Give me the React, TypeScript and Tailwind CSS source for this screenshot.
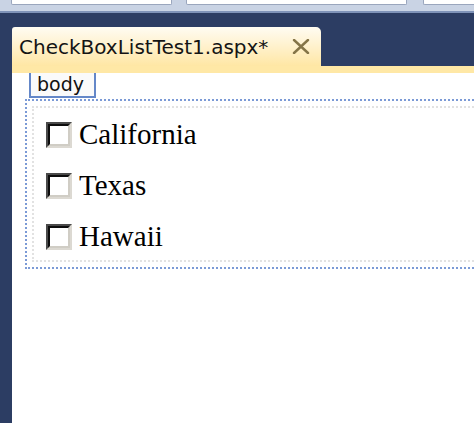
const ITEMS = ['California', 'Texas', 'Hawaii']

function CloseIcon() {
  return (
    <svg width="18" height="15" viewBox="0 0 18 15" aria-hidden>
      <path d="M2 1 L16 14 M16 1 L2 14" stroke="#857548" strokeWidth="2.4" strokeLinecap="round" />
    </svg>
  )
}

function Box() {
  return (
    <span className="flex h-[26px] w-[26px] shrink-0 border-2 border-t-[#4a4a4a] border-l-[#4a4a4a] border-b-[#dcd9d2] border-r-[#dcd9d2]">
      <span className="flex-1 border-2 border-t-[#0d0d0d] border-l-[#0d0d0d] border-b-[#d0cdc5] border-r-[#d0cdc5] bg-white" />
    </span>
  )
}

export default function App() {
  return (
    <div className="flex h-[423px] w-[474px] flex-col overflow-hidden bg-[#2c3d63]">
      {/* toolbar remnants */}
      <div className="relative h-[13px] shrink-0 border-b-2 border-[#7f93b8] bg-[#c9d3e4]">
        <div className="flex h-[5px] gap-0">
          <div className="ml-[11px] w-[161px] rounded-b-[2px] border border-t-0 border-[#9aa6bd] bg-white" />
          <div className="ml-[14px] w-[221px] rounded-b-[2px] border border-t-0 border-[#9aa6bd] bg-white" />
          <div className="ml-[16px] flex-1 rounded-bl-[2px] border border-t-0 border-r-0 border-[#9aa6bd] bg-white" />
        </div>
      </div>

      {/* document tab */}
      <div className="flex pl-[12px] pt-[14px]">
        <div className="flex h-[39px] w-[309px] items-center justify-between rounded-tl-[3px] rounded-tr-[5px] bg-gradient-to-b from-[#fffcf2] via-[#fff1cc] to-[#ffe7a4] pl-[7px] pr-[11px]">
          <span className="text-[20px] leading-none text-[#141414]" style={{ fontFamily: '"DejaVu Sans", sans-serif' }}>
            CheckBoxListTest1.aspx*
          </span>
          <CloseIcon />
        </div>
      </div>

      {/* editor */}
      <div className="flex flex-1 pl-[12px]">
        <div className="flex flex-1 flex-col bg-white">
          <div className="h-[7px] bg-[#ffe8a6]" />
          <div className="flex flex-col pl-[13px]">
            <div className="ml-[4px] flex h-[25px] w-[67px] items-center border-2 border-t-0 border-[#6487c8] bg-[#fafafa] pl-[6px]">
              <span className="text-[19px] leading-none text-[#111]" style={{ fontFamily: '"DejaVu Sans", sans-serif' }}>
                body
              </span>
            </div>
            <div className="mt-[1px] w-[480px] border-2 border-dotted border-[#7b9ad6] p-[5px]">
              <div className="flex h-[156px] flex-col border-2 border-dotted border-[#e2e2e2] pl-[12px] pt-[1px]">
                {ITEMS.map((name) => (
                  <div key={name} className="flex h-[51px] shrink-0 items-center">
                    <Box />
                    <span
                      className="ml-[7px] text-[29px] leading-none text-black"
                      style={{ fontFamily: '"Liberation Serif", serif' }}
                    >
                      {name}
                    </span>
                  </div>
                ))}
              </div>
            </div>
          </div>
        </div>
      </div>
    </div>
  )
}
